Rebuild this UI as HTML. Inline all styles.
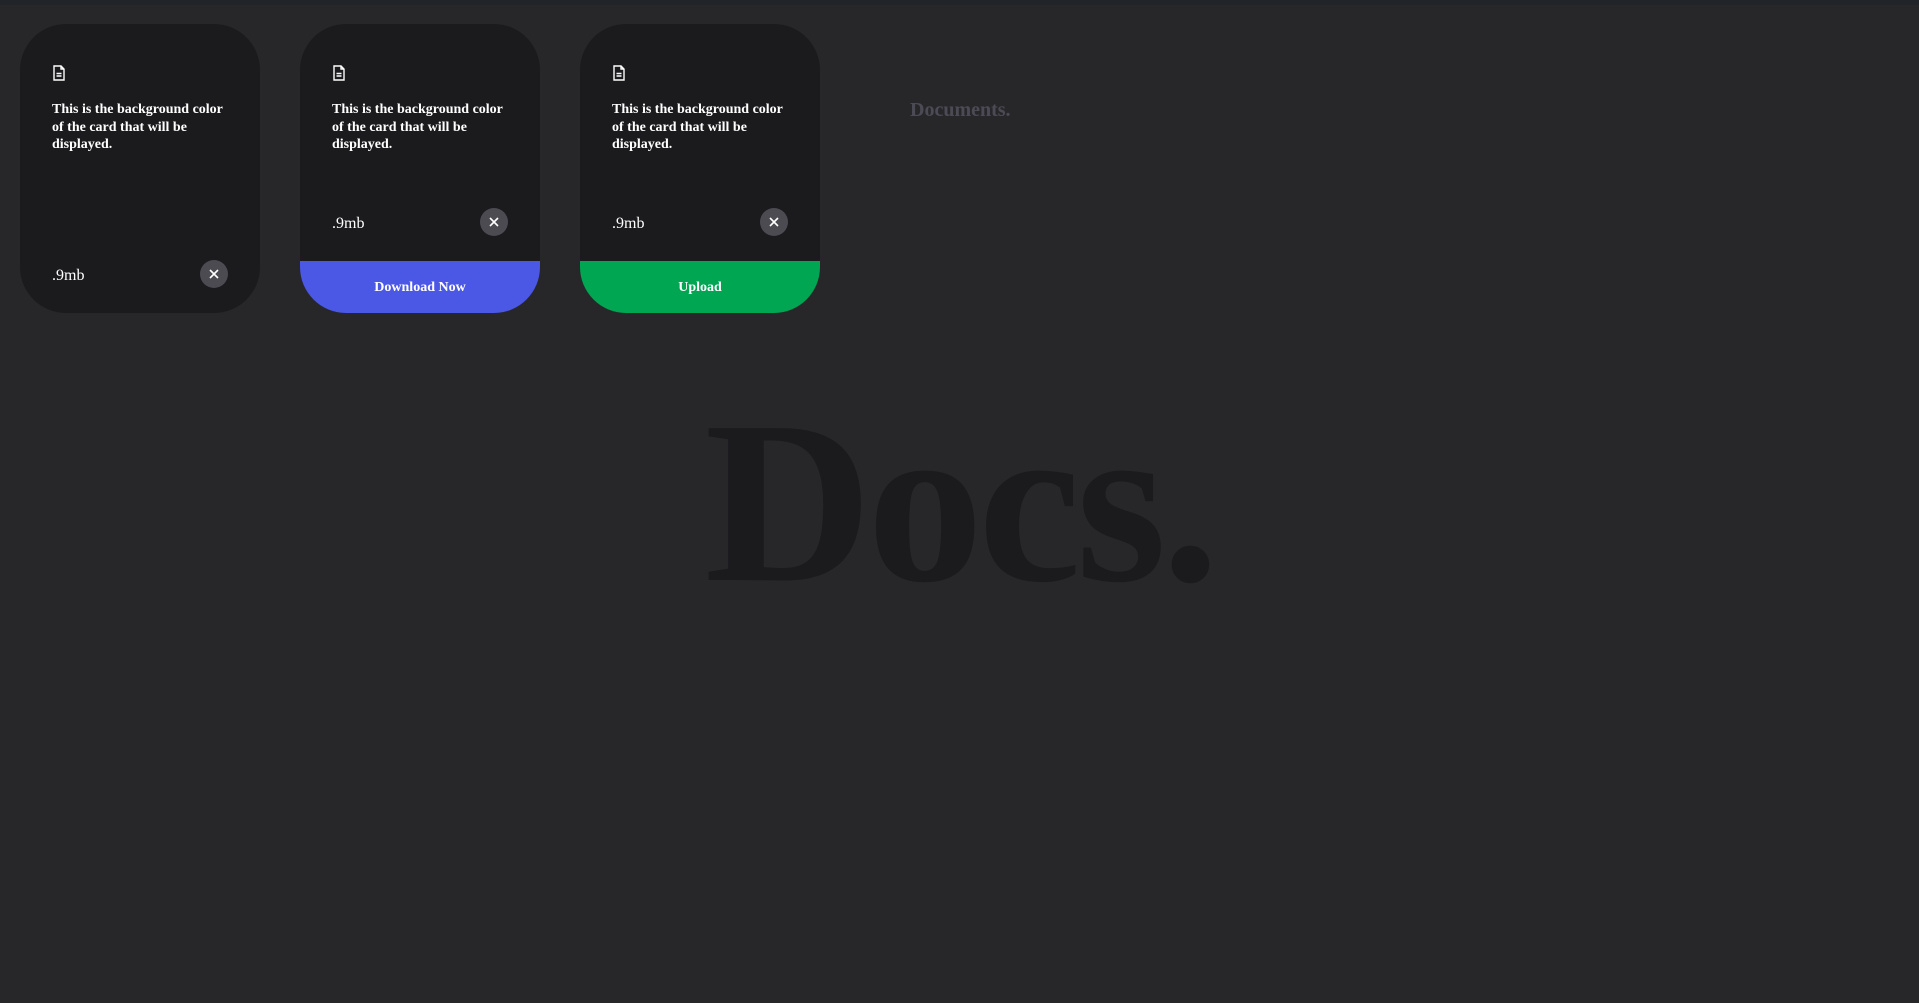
<!DOCTYPE html>
<html><head><style>
html,body{margin:0;padding:0}
body{width:1919px;height:1003px;background:#27272a;position:relative;overflow:hidden;font-family:"Liberation Serif",serif}
.top{position:absolute;left:0;top:0;width:1919px;height:5px;background:#212428}
.card{position:absolute;top:24px;width:240px;height:289px;background:#1b1b1e;border-radius:46px;overflow:hidden}
.icon{position:absolute;left:32px;top:41px}
.txt{position:absolute;left:32px;width:185px;color:#fff;font-weight:bold;font-size:14px;line-height:17.5px}
.size{position:absolute;left:32px;color:#fff;font-size:16px}
.x{position:absolute;left:180px;width:28px;height:28px;border-radius:50%;background:#4c4b52}
.bar{position:absolute;left:0;top:237px;width:240px;height:52px;color:#fff;font-weight:bold;font-size:14px;text-align:center;line-height:54px}
.doc{position:absolute;left:910px;top:99px;color:#4c4b55;font-weight:bold;font-size:20px}
.big{position:absolute;left:0;width:1919px;text-align:center;top:387px;font-size:232px;font-weight:bold;color:#1b1b1e;letter-spacing:-5px;line-height:1}
</style></head><body>
<div class="top"></div>
<div class="card" style="left:20px">
<svg class="icon" width="14" height="16" viewBox="0 0 14 16"><path d="M2 1h7l3 3v11H2z M9 1v3h3 M4.5 8.5h5 M4.5 11h5" fill="none" stroke="#fff" stroke-width="1.4"/></svg>
<div class="txt" style="top:77px">This is the background color of the card that will be displayed.</div>
<div class="size" style="top:243px">.9mb</div>
<div class="x" style="top:236px"><svg width="28" height="28"><path d="M10 10l8 8M18 10l-8 8" stroke="#fff" stroke-width="1.6"/></svg></div>
</div>
<div class="card" style="left:300px">
<svg class="icon" width="14" height="16" viewBox="0 0 14 16"><path d="M2 1h7l3 3v11H2z M9 1v3h3 M4.5 8.5h5 M4.5 11h5" fill="none" stroke="#fff" stroke-width="1.4"/></svg>
<div class="txt" style="top:77px">This is the background color of the card that will be displayed.</div>
<div class="size" style="top:191px">.9mb</div>
<div class="x" style="top:184px"><svg width="28" height="28"><path d="M10 10l8 8M18 10l-8 8" stroke="#fff" stroke-width="1.6"/></svg></div>
<div class="bar" style="background:#4b58e6">Download Now</div>
</div>
<div class="card" style="left:580px">
<svg class="icon" width="14" height="16" viewBox="0 0 14 16"><path d="M2 1h7l3 3v11H2z M9 1v3h3 M4.5 8.5h5 M4.5 11h5" fill="none" stroke="#fff" stroke-width="1.4"/></svg>
<div class="txt" style="top:77px">This is the background color of the card that will be displayed.</div>
<div class="size" style="top:191px">.9mb</div>
<div class="x" style="top:184px"><svg width="28" height="28"><path d="M10 10l8 8M18 10l-8 8" stroke="#fff" stroke-width="1.6"/></svg></div>
<div class="bar" style="background:#00a652">Upload</div>
</div>
<div class="doc">Documents.</div>
<div class="big">Docs.</div>
</body></html>
